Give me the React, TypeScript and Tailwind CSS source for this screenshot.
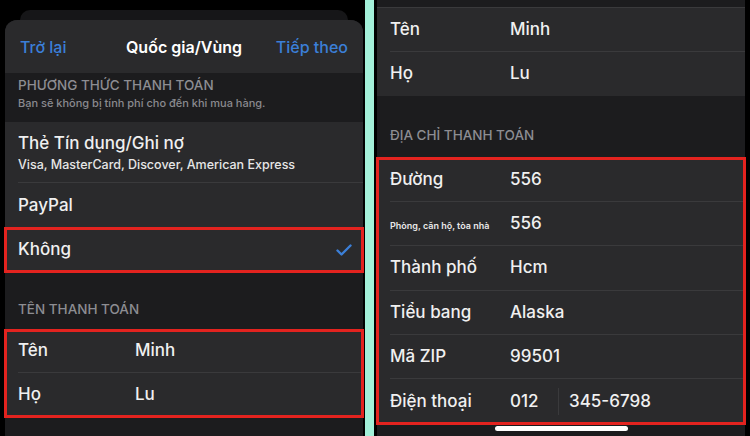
import React from 'react';

const redBox = 'outline-3 outline-[#e3231f] -outline-offset-2';

type RowProps = {
  label: React.ReactNode;
  value?: React.ReactNode;
  height: string;
  last?: boolean;
  labelWidth?: string;
  right?: React.ReactNode;
};

const Row = ({ label, value, height, last, labelWidth = 'w-[117px]', right }: RowProps) => (
  <div className={`pl-[13px] ${height}`}>
    <div className={`flex h-full items-center pr-[12px] ${last ? '' : 'border-b border-[#3a3a3c]'}`}>
      <div className={`${labelWidth} shrink-0 text-[17px] font-medium text-[#f0f0f0]`}>{label}</div>
      <div className="flex-1 text-[17px] font-medium text-[#f0f0f0]">{value}</div>
      {right}
    </div>
  </div>
);

const Check = () => (
  <svg width="16" height="12" viewBox="0 0 16 12" fill="none" className="mr-[-1px]">
    <path d="M1.5 6.5 L5.5 10.5 L14.5 1.5" stroke="#3b7fd8" strokeWidth="2.4" strokeLinecap="round" strokeLinejoin="round" />
  </svg>
);

const LeftPanel = () => (
  <div className="flex w-[365px] shrink-0 flex-col bg-black">
    <div className="h-[10px]" />
    {/* sheet stacked behind */}
    <div className="ml-[20px] mr-[17px] h-[10px] rounded-t-[10px] bg-[#161618]" />
    <div className="ml-[5px] mr-[2px] flex flex-1 flex-col rounded-t-[12px] bg-[#1c1c1e]">
      {/* nav bar */}
      <div className="grid h-[53px] grid-cols-[1fr_auto_1fr] items-center rounded-t-[12px] bg-[#2a2a2c] px-[15px] text-[16px] font-medium">
        <span className="text-[#3b7fd8]">Trở lại</span>
        <span className="font-semibold text-white">Quốc gia/Vùng</span>
        <span className="text-right text-[#3b7fd8]">Tiếp theo</span>
      </div>

      <div className="h-[49px] px-[13px] pt-[4px]">
        <div className="text-[13.5px] font-medium leading-[16px] text-[#8d8d92]">PHƯƠNG THỨC THANH TOÁN</div>
        <div className="mt-[3px] text-[11px] font-medium leading-[14px] text-[#8a8a8f]">Bạn sẽ không bị tính phí cho đến khi mua hàng.</div>
      </div>

      <div className="bg-[#2a2a2c]">
        <div className="h-[61px] pl-[13px]">
          <div className="h-full border-b border-[#3a3a3c] pt-[10px]">
            <div className="text-[17px] font-medium leading-[22px] text-[#f0f0f0]">Thẻ Tín dụng/Ghi nợ</div>
            <div className="mt-[3px] text-[12.5px] font-medium leading-[16px] text-[#e6e6e6]">Visa, MasterCard, Discover, American Express</div>
          </div>
        </div>
        <Row label="PayPal" height="h-[45px]" last />
        <div className={redBox}>
          <Row label="Không" height="h-[44px]" last right={<Check />} />
        </div>
      </div>

      <div className="flex h-[58px] items-end px-[13px] pb-[13px]">
        <span className="text-[13.5px] font-medium leading-[16px] text-[#8d8d92]">TÊN THANH TOÁN</span>
      </div>

      <div className={`bg-[#2a2a2c] ${redBox}`}>
        <Row label="Tên" value="Minh" height="h-[43px]" />
        <Row label="Họ" value="Lu" height="h-[44px]" last />
      </div>
    </div>
  </div>
);

const RightPanel = () => (
  <div className="flex flex-1 flex-col bg-black pl-[3px] pr-[5px]">
    <div className="flex flex-1 flex-col bg-[#1c1c1e]">
      <div className="h-[8px] border-b border-[#3a3a3c]" />
      <div className="bg-[#2a2a2c]">
        <Row label="Tên" value="Minh" height="h-[44px]" labelWidth="w-[120px]" />
        <Row label="Họ" value="Lu" height="h-[44px]" labelWidth="w-[120px]" last />
      </div>

      <div className="flex h-[62px] items-end px-[13px] pb-[15px]">
        <span className="text-[13.5px] font-medium leading-[16px] text-[#8d8d92]">ĐỊA CHỈ THANH TOÁN</span>
      </div>

      <div className={`bg-[#2a2a2c] ${redBox}`}>
        <Row label="Đường" value="556" height="h-[44px]" labelWidth="w-[120px]" />
        <Row
          label={<span className="text-[9px] font-semibold text-[#e8e8e8]">Phòng, căn hộ, tòa nhà</span>}
          value="556"
          height="h-[44px]"
          labelWidth="w-[120px]"
        />
        <Row label="Thành phố" value="Hcm" height="h-[45px]" labelWidth="w-[120px]" />
        <Row label="Tiểu bang" value="Alaska" height="h-[44px]" labelWidth="w-[120px]" />
        <Row label="Mã ZIP" value="99501" height="h-[44px]" labelWidth="w-[120px]" />
        <Row
          label="Điện thoại"
          value={
            <div className="flex items-center">
              <span className="w-[48px]">012</span>
              <span className="h-[27px] border-l border-[#3a3a3c]" />
              <span className="pl-[10px]">345-6798</span>
            </div>
          }
          height="h-[45px]"
          labelWidth="w-[120px]"
          last
        />
      </div>

      <div className="flex flex-1 justify-center pt-[2px]">
        <div className="h-[5px] w-[133px] rounded-full bg-white" />
      </div>
    </div>
  </div>
);

export default function App() {
  return (
    <div className="flex h-[436px] w-[750px] overflow-hidden bg-black font-['Inter','Noto_Sans',sans-serif]">
      <LeftPanel />
      <div className="w-[9px] shrink-0 bg-[#a3f0d9]" />
      <RightPanel />
    </div>
  );
}
